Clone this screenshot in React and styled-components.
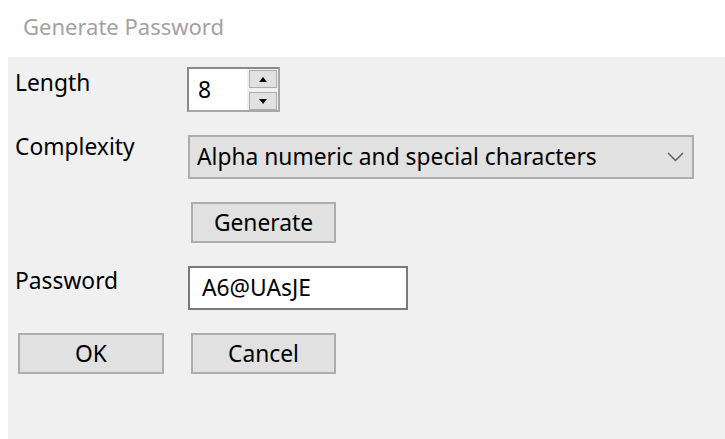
import styled, { createGlobalStyle } from "styled-components";

const GlobalStyle = createGlobalStyle`
  html, body {
    margin: 0;
    padding: 0;
    background: #ffffff;
  }
  body {
    font-family: "Noto Sans", "Open Sans", sans-serif;
    font-size: 22.8px;
    color: #000000;
  }
`;

const Window = styled.div`
  width: 725px;
  height: 439px;
  display: flex;
  flex-direction: column;
  overflow: hidden;
`;

const TitleBar = styled.div`
  height: 57px;
  box-sizing: border-box;
  padding: 11px 0 0 23px;
  color: #a2a2a2;
  font-size: 22px;
  line-height: 30px;
`;

const Panel = styled.div`
  flex: 1;
  margin-left: 8px;
  background: #f0f0f0;
  padding: 10px 0 0 7px;
  display: grid;
  grid-template-columns: 173px 1fr;
  grid-template-rows: 45px 44px 41px 44px 41px;
  row-gap: 23px;
  align-content: start;
`;

const Label = styled.div`
  align-self: start;
  line-height: 30px;
  margin-top: ${(p) => p.$shift || 0}px;
`;

const Cell = styled.div`
  display: flex;
  align-items: stretch;
  margin-left: ${(p) => p.$inset || 0}px;
`;

const Spinner = styled.div`
  width: 93px;
  display: flex;
  box-sizing: border-box;
  border: 2px solid #a6a6a6;
  border-left-color: #8a8a8a;
  border-top-color: #8a8a8a;
  background: #f0f0f0;
`;

const SpinValue = styled.div`
  width: 58px;
  background: #ffffff;
  padding-left: 9px;
  box-sizing: border-box;
  display: flex;
  align-items: center;
  line-height: 30px;
`;

const SpinButtons = styled.div`
  flex: 1;
  display: flex;
  flex-direction: column;
  justify-content: space-between;
  padding: 1px 1px 0 2px;
`;

const SpinButton = styled.div`
  height: 18px;
  box-sizing: border-box;
  border: 1px solid #adadad;
  background: #e1e1e1;
  display: flex;
  align-items: center;
  justify-content: center;
`;

const Triangle = styled.span`
  width: 0;
  height: 0;
  border-left: 4px solid transparent;
  border-right: 4px solid transparent;
  ${(p) =>
    p.$dir === "up"
      ? "border-bottom: 5px solid #000;"
      : "border-top: 5px solid #000;"}
`;

const Select = styled.div`
  width: 506px;
  box-sizing: border-box;
  border: 2px solid #adadad;
  background: #e1e1e1;
  display: flex;
  align-items: center;
  justify-content: space-between;
  padding: 0 8px 0 7px;
  line-height: 30px;
`;

const Button = styled.div`
  width: ${(p) => p.$w || 145}px;
  box-sizing: border-box;
  border: 2px solid #adadad;
  background: #e1e1e1;
  display: flex;
  align-items: center;
  justify-content: center;
  line-height: 30px;
`;

const TextBox = styled.div`
  width: 220px;
  box-sizing: border-box;
  border: 2px solid #7a7a7a;
  background: #ffffff;
  display: flex;
  align-items: center;
  padding-left: 12px;
  line-height: 30px;
`;

const Chevron = () => (
  <svg width="17" height="10" viewBox="0 0 17 10">
    <polyline
      points="1,1 8.5,8.5 16,1"
      fill="none"
      stroke="#606060"
      strokeWidth="1.5"
    />
  </svg>
);

export default function App() {
  return (
    <>
      <GlobalStyle />
      <Window>
        <TitleBar>Generate Password</TitleBar>
        <Panel>
          <Label $shift={1}>Length</Label>
          <Cell $inset={-1}>
            <Spinner>
              <SpinValue>8</SpinValue>
              <SpinButtons>
                <SpinButton>
                  <Triangle $dir="up" />
                </SpinButton>
                <SpinButton>
                  <Triangle $dir="down" />
                </SpinButton>
              </SpinButtons>
            </Spinner>
          </Cell>

          <Label $shift={-3}>Complexity</Label>
          <Cell>
            <Select>
              <span>Alpha numeric and special characters</span>
              <Chevron />
            </Select>
          </Cell>

          <div />
          <Cell $inset={3}>
            <Button>Generate</Button>
          </Cell>

          <Label>Password</Label>
          <Cell>
            <TextBox>A6@UAsJE</TextBox>
          </Cell>

          <Cell $inset={3}>
            <Button $w={146}>OK</Button>
          </Cell>
          <Cell $inset={3}>
            <Button>Cancel</Button>
          </Cell>
        </Panel>
      </Window>
    </>
  );
}
